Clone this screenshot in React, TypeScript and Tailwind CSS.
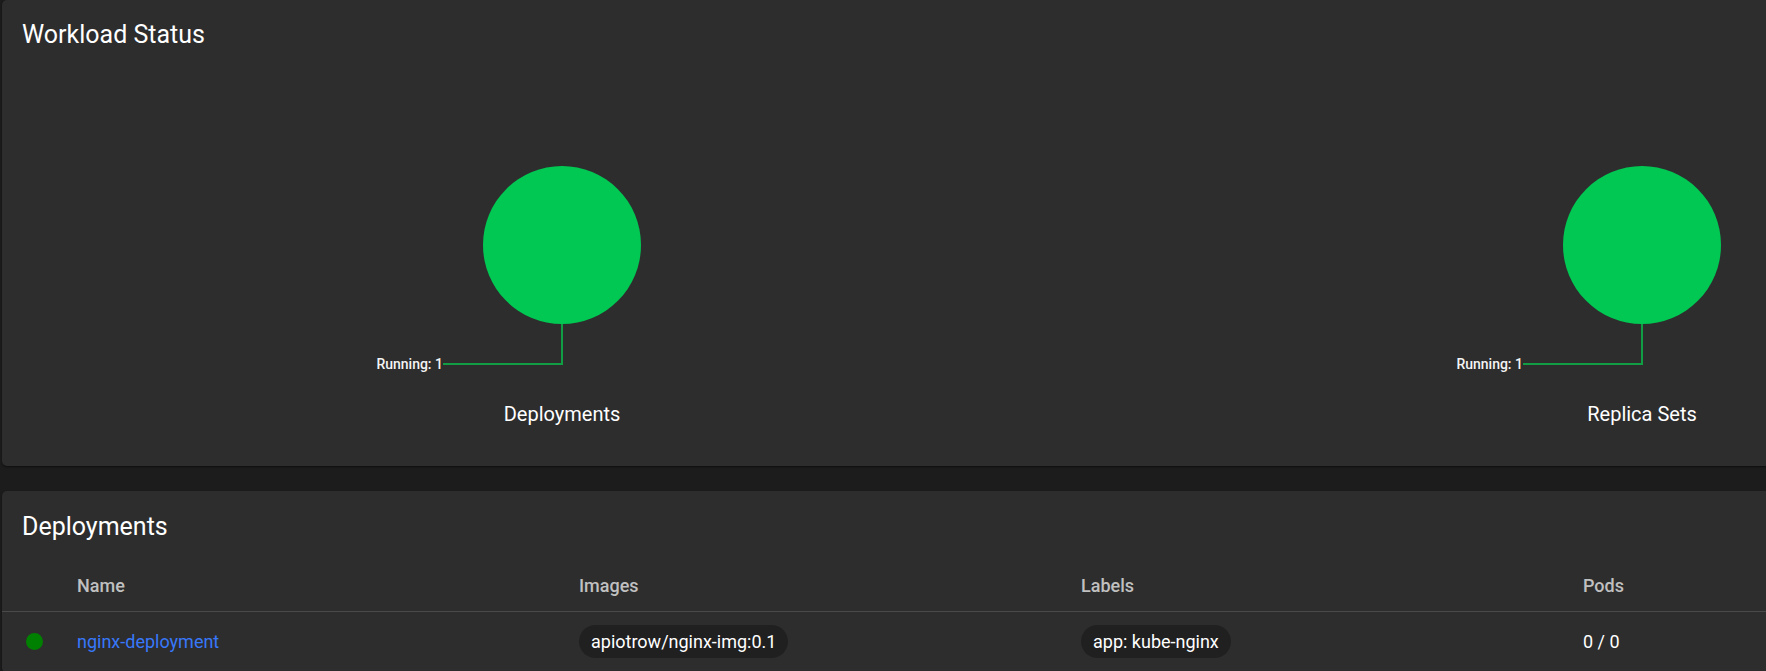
type Deployment = {
  name: string;
  image: string;
  label: string;
  pods: string;
};

const deployments: Deployment[] = [
  {
    name: 'nginx-deployment',
    image: 'apiotrow/nginx-img:0.1',
    label: 'app: kube-nginx',
    pods: '0 / 0',
  },
];

function StatusChart({ title, label }: { title: string; label: string }) {
  return (
    <figure className="flex flex-1 flex-col items-center">
      <svg viewBox="0 0 400 230" className="h-[230px] w-[400px]" role="img" aria-label={`${title} ${label}`}>
        <path d="M200 150V206H81" fill="none" stroke="#109d44" strokeWidth="2" />
        <circle cx="200" cy="87" r="79" fill="#00c853" />
        <text x="81" y="211" textAnchor="end" fill="#f4f4f4" className="text-[14px] font-medium">
          {label}
        </text>
      </svg>
      <figcaption className="mt-3 text-[20px] leading-7 text-white">{title}</figcaption>
    </figure>
  );
}

function Chip({ text }: { text: string }) {
  return <span className="inline-block rounded-full bg-[#202020] px-3 leading-[33px]">{text}</span>;
}

export default function App() {
  return (
    <div className="min-h-screen overflow-hidden bg-[#1c1c1c] pl-[2px] font-['Roboto',sans-serif] text-white">
      <main className="flex w-[calc(100%+436px)] flex-col gap-[25px]">
        <section className="rounded-[5px] bg-[#2d2d2d] pb-[38px] shadow-[0_1px_2px_rgba(0,0,0,0.5)]">
          <h2 className="px-5 pt-[19px] text-[25px] leading-8">Workload Status</h2>
          <div className="flex px-5 pt-[107px]">
            <StatusChart title="Deployments" label="Running: 1" />
            <StatusChart title="Replica Sets" label="Running: 1" />
          </div>
        </section>

        <section className="rounded-[5px] bg-[#2d2d2d] shadow-[0_1px_2px_rgba(0,0,0,0.5)]">
          <h2 className="px-5 pt-5 text-[25px] leading-8">Deployments</h2>
          <table className="mt-[18px] w-full table-fixed text-left text-[18px] leading-6">
            <thead>
              <tr className="h-[50px] border-b border-[#494949] text-[#c0c0c0]">
                <th className="w-[75px]" aria-label="Status"></th>
                <th className="w-[502px] font-medium">Name</th>
                <th className="w-[502px] font-medium">Images</th>
                <th className="w-[502px] font-medium">Labels</th>
                <th className="font-medium">Pods</th>
              </tr>
            </thead>
            <tbody>
              {deployments.map((d) => (
                <tr key={d.name} className="h-[61px] border-b border-[#494949]">
                  <td className="pl-6">
                    <span className="block size-[17px] rounded-full bg-[#008000]" />
                  </td>
                  <td>
                    <a href="#nginx-deployment" className="text-[#3878fa]">{d.name}</a>
                  </td>
                  <td><Chip text={d.image} /></td>
                  <td><Chip text={d.label} /></td>
                  <td>{d.pods}</td>
                </tr>
              ))}
            </tbody>
          </table>
        </section>
      </main>
    </div>
  );
}
